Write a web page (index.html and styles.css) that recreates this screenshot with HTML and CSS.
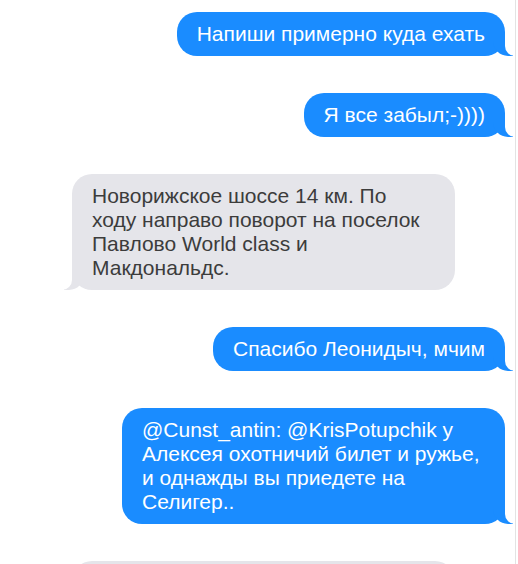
FILE: index.html
```html
<!DOCTYPE html>
<html lang="ru">
<head>
    <meta charset="UTF-8">
    <meta name="viewport" content="width=device-width, initial-scale=1.0">
    <title>Сообщения</title>
    <link rel="stylesheet" href="styles.css">
</head>
<body>
    <div class="chat">
        <p class="msg from-me">Напиши примерно куда ехать</p>
        <p class="msg from-me">Я все забыл;-))))</p>
        <p class="msg from-them">Новорижское шоссе 14 км. По ходу направо поворот на поселок Павлово World class и Макдональдс.</p>
        <p class="msg from-me">Спасибо Леонидыч, мчим</p>
        <p class="msg from-me">@Cunst_antin: @KrisPotupchik у Алексея охотничий билет и ружье, и однажды вы приедете на Селигер..</p>
        <!-- next message, cut off by the bottom edge -->
        <div class="msg from-them msg-cut"></div>
    </div>
</body>
</html>
```

FILE: styles.css
```css
/* Reset */
* {
    margin: 0;
    padding: 0;
    box-sizing: border-box;
}

body {
    font-family: 'Liberation Sans', Arial, sans-serif;
    background-color: #ffffff;
    overflow: hidden;
}

/* Chat column */
.chat {
    display: flex;
    flex-direction: column;
    align-items: flex-start;
    gap: 37px;
    width: 516px;
    height: 564px;
    padding: 12px 10px 0 72px;
    border-right: 1px solid #e3e3e3;
    overflow: hidden;
}

/* Bubbles */
.msg {
    position: relative;
    flex-shrink: 0;
    max-width: 383px;
    padding: 10px 20px;
    border-radius: 20px;
    font-size: 21px;
    line-height: 24px;
}

.from-me {
    align-self: flex-end;
    background-color: #1a8cff;
    color: #ffffff;
}

.from-them {
    background-color: #e5e5ea;
    color: #3c3c3c;
}

.msg-cut {
    width: 383px;
    height: 44px;
}

/* Tails */
.msg::before,
.msg::after {
    content: "";
    position: absolute;
    bottom: 0;
    height: 20px;
}

.from-me::before {
    right: -8px;
    width: 20px;
    background-color: #1a8cff;
    border-bottom-left-radius: 15px;
}

.from-me::after {
    right: -10px;
    width: 10px;
    background-color: #ffffff;
    border-bottom-left-radius: 10px;
}

.from-them::before {
    left: -8px;
    width: 20px;
    background-color: #e5e5ea;
    border-bottom-right-radius: 15px;
}

.from-them::after {
    left: -10px;
    width: 10px;
    background-color: #ffffff;
    border-bottom-right-radius: 10px;
}
```
